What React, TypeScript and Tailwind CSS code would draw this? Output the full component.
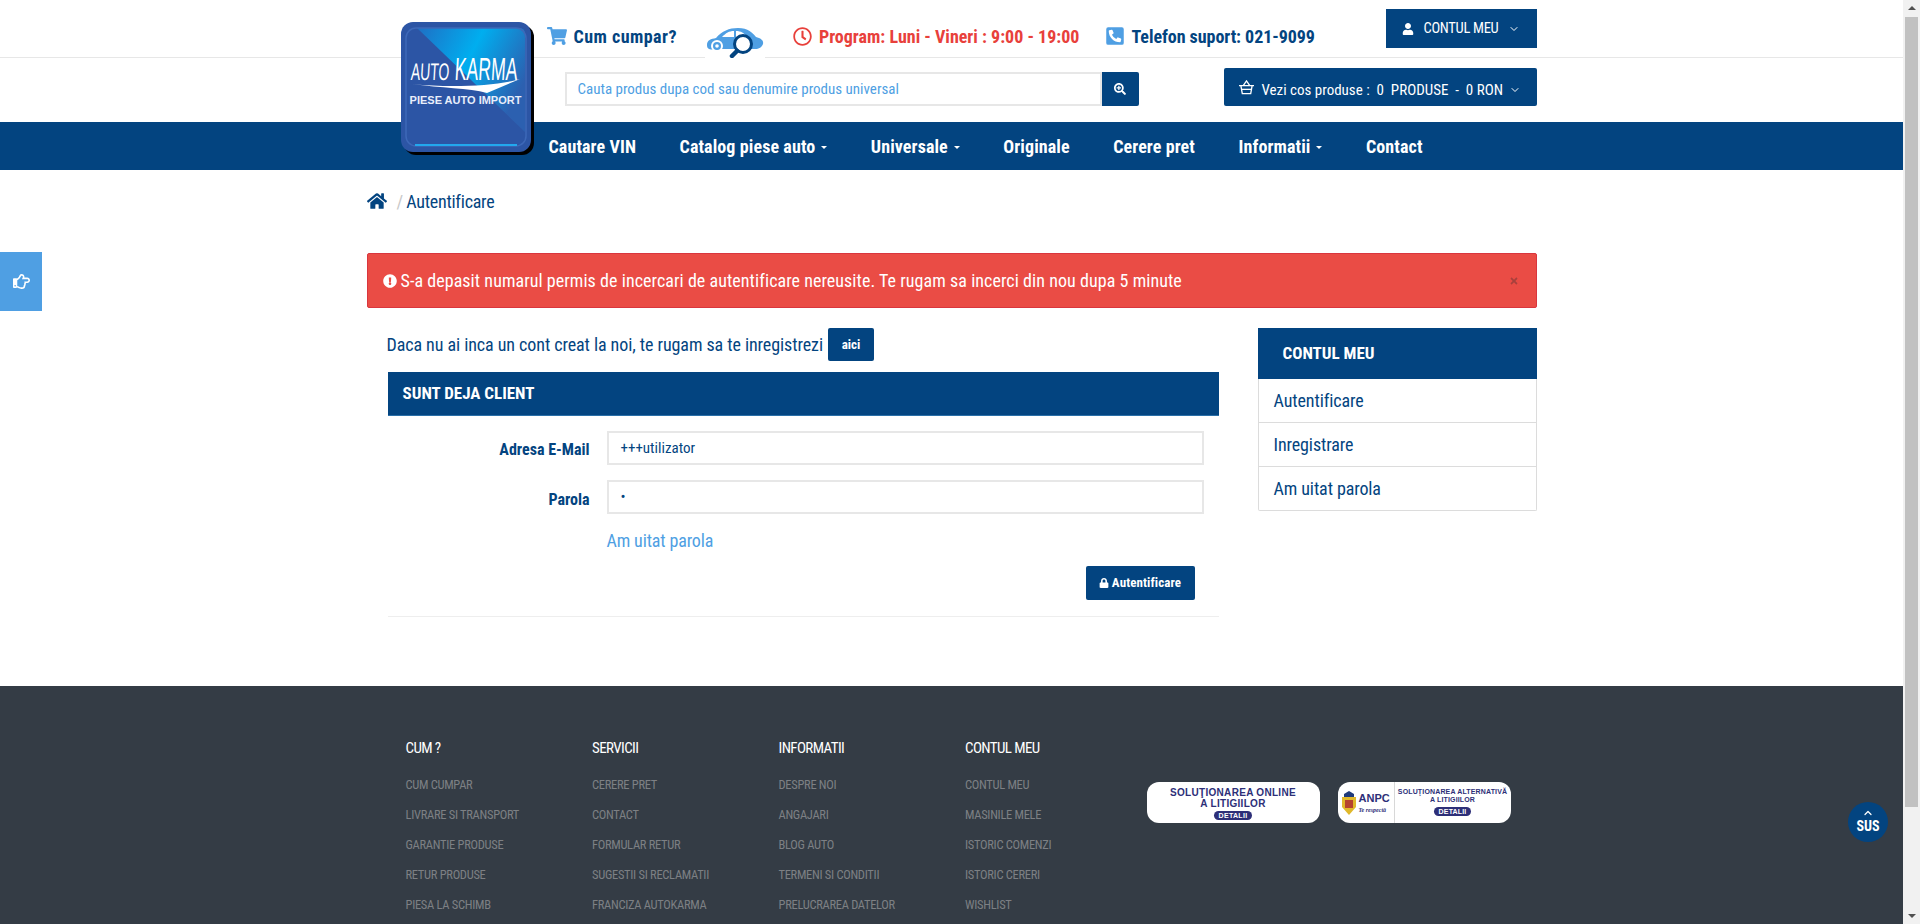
import { ChevronDown, ChevronUp } from "lucide-react";
import {
	FaExclamationCircle,
	FaHome,
	FaLock,
	FaPhoneSquareAlt,
	FaRegClock,
	FaRegHandPointRight,
	FaSearchPlus,
	FaShoppingCart,
	FaTimes,
	FaUser,
} from "react-icons/fa";

const navItems = [
	{ label: "Cautare VIN" },
	{ label: "Catalog piese auto", caret: true },
	{ label: "Universale", caret: true },
	{ label: "Originale" },
	{ label: "Cerere pret" },
	{ label: "Informatii", caret: true },
	{ label: "Contact" },
];

const footerColumns = [
	{
		title: "CUM ?",
		links: ["CUM CUMPAR", "LIVRARE SI TRANSPORT", "GARANTIE PRODUSE", "RETUR PRODUSE", "PIESA LA SCHIMB"],
	},
	{
		title: "SERVICII",
		links: ["CERERE PRET", "CONTACT", "FORMULAR RETUR", "SUGESTII SI RECLAMATII", "FRANCIZA AUTOKARMA"],
	},
	{
		title: "INFORMATII",
		links: ["DESPRE NOI", "ANGAJARI", "BLOG AUTO", "TERMENI SI CONDITII", "PRELUCRAREA DATELOR"],
	},
	{
		title: "CONTUL MEU",
		links: ["CONTUL MEU", "MASINILE MELE", "ISTORIC COMENZI", "ISTORIC CERERI", "WISHLIST"],
	},
];

function Logo() {
	return (
		<div className="absolute left-[34px] top-[22px] z-20 h-[130px] w-[130px] rounded-[12px] bg-[#2c55a5] shadow-[3px_3px_0_#000]">
			<svg viewBox="0 0 130 130" className="absolute inset-0 h-full w-full">
				<defs>
					<linearGradient id="logoShine" x1="0" y1="0" x2="1" y2="0.5">
						<stop offset="0" stopColor="#1f6fc4" />
						<stop offset="0.5" stopColor="#00aeef" />
						<stop offset="1" stopColor="#2c60b0" />
					</linearGradient>
				</defs>
				<path d="M16 6H118Q124 6 124 12V110Z" fill="url(#logoShine)" />
				<rect x="5" y="6" width="120" height="118" rx="10" fill="none" stroke="#3d68b8" strokeWidth="1.5" />
				<rect x="14" y="122" width="102" height="2" fill="#22a8ee" />
				<path d="M11 62C40 66 68 66 86 71L119 57C96 64 50 66 11 62Z" fill="#fff" />
			</svg>
			<span className="absolute left-[10px] top-[36px] origin-left -skew-x-6 scale-x-[0.58] font-['Liberation_Sans',sans-serif] text-[24px] leading-[27px] text-white">
				AUTO
			</span>
			<span className="absolute left-[54px] top-[30px] origin-left -skew-x-6 scale-x-[0.55] font-['Liberation_Sans',sans-serif] text-[32px] leading-[34px] text-white">
				KARMA
			</span>
			<div className="absolute inset-x-0 top-[72px] text-center font-['Liberation_Sans',sans-serif] text-[11px] font-bold leading-[12px] text-[#e8eefb]">
				PIESE AUTO IMPORT
			</div>
		</div>
	);
}

function CarSearch() {
	return (
		<svg viewBox="0 0 60 32" className="h-[32px] w-[60px]">
			<path
				d="M2 19C2 14 6 13 11 12C17 5 24 2 33 2C43 2 48 7 51 11C55 12 59 14 58 18C57 21 54 23 50 23H12C6 24 2 24 2 19Z"
				fill="#4f9fe3"
			/>
			<path d="M17 11C21 7 24 5 29 5V11ZM31 5C36 5 39 7 42 11H31Z" fill="#fff" />
			<circle cx="12" cy="20" r="6" fill="#fff" />
			<circle cx="12" cy="20" r="4" fill="#4f9fe3" />
			<circle cx="12" cy="20" r="1.8" fill="#fff" />
			<circle cx="38" cy="18" r="8.5" fill="#fff" stroke="#034480" strokeWidth="3" />
			<path d="M32 25L27 30" stroke="#034480" strokeWidth="4.5" strokeLinecap="round" />
		</svg>
	);
}

function Basket() {
	return (
		<svg viewBox="0 0 18 16" fill="none" stroke="#fff" strokeWidth="1.4" className="-mt-[5px] h-[15px] w-[17px] shrink-0">
			<path d="M1 6H17M3 6L4.5 14.5H13.5L15 6M5.5 6L9 1L12.5 6" />
			<path d="M4 10H14" />
		</svg>
	);
}

function Caret() {
	return <span className="ml-[6px] inline-block h-0 w-0 border-x-[3px] border-t-[3px] border-x-transparent border-t-white align-middle" />;
}

function Badges() {
	return (
		<div className="mt-[34px] flex gap-[18px] font-['Liberation_Sans',sans-serif] font-bold text-[#2d2f78]">
			<div className="flex h-[41px] w-[173px] flex-col items-center rounded-[12px] bg-white pt-[5px] text-[10px] leading-[11px] tracking-[0.3px]">
				<span>SOLUŢIONAREA ONLINE</span>
				<span>A LITIGIILOR</span>
				<span className="mt-[2px] rounded-full bg-[#2d2f78] px-[5px] text-[7px] leading-[9px] text-white">DETALII</span>
			</div>
			<div className="flex h-[41px] w-[173px] rounded-[12px] bg-white">
				<div className="flex w-[57px] items-center gap-[1px] border-r border-[#d8d8d8] pl-[2px]">
					<svg viewBox="0 0 18 24" className="h-[24px] w-[18px] shrink-0">
						<path d="M4 3L9 0L14 3V6H4Z" fill="#1f3a7a" />
						<path d="M2 6H16V16L9 24L2 16Z" fill="#e0b82a" />
						<rect x="5" y="9" width="8" height="8" fill="#b5422e" />
					</svg>
					<div className="flex flex-col leading-none">
						<span className="text-[11px]">ANPC</span>
						<span className="mt-[3px] font-['Liberation_Serif',serif] text-[6px] italic">Te respectă</span>
					</div>
				</div>
				<div className="flex flex-1 flex-col items-center pt-[6px] text-[7px] leading-[8px] tracking-[0.15px]">
					<span className="whitespace-nowrap">SOLUŢIONAREA ALTERNATIVĂ</span>
					<span>A LITIGIILOR</span>
					<span className="mt-[3px] rounded-full bg-[#2d2f78] px-[5px] text-[7px] leading-[9px] text-white">DETALII</span>
				</div>
			</div>
		</div>
	);
}

export default function App() {
	return (
		<div className="relative flex h-[924px] w-[1920px] overflow-hidden bg-white font-['Roboto',sans-serif] text-[#034480] [font-stretch:85%]">
			<div className="w-[1903px] shrink-0">
				<header>
					<div className="border-b border-[#e7e7e7]">
						<div className="relative mx-auto flex h-[57px] w-[1170px] items-start">
							<Logo />
							<div className="flex h-full flex-1 items-center pl-[180px] pt-[15px]">
								<FaShoppingCart className="text-[20px] text-[#4f9fe3]" />
								<span className="ml-[7px] text-[18px] font-bold tracking-[0.45px]">Cum cumpar?</span>
								<div className="z-10 -mb-px ml-[28px] flex h-[40px] w-[60px] items-end self-end bg-white">
									<CarSearch />
								</div>
								<FaRegClock className="ml-[28px] text-[19px] text-[#e8403b]" />
								<span className="ml-[7px] text-[18px] font-bold text-[#e8403b]">Program: Luni - Vineri : 9:00 - 19:00</span>
								<FaPhoneSquareAlt className="ml-[26px] text-[20px] text-[#4f9fe3]" />
								<span className="ml-[6px] text-[18px] font-bold tracking-[-0.05px]">Telefon suport: 021-9099</span>
							</div>
							<div className="mt-[9px] flex h-[39px] w-[151px] items-center justify-center gap-[10px] bg-[#034480] text-[14.5px] tracking-[-0.3px] text-white">
								<FaUser className="text-[12px]" />
								<span>CONTUL MEU</span>
								<ChevronDown size={12} />
							</div>
						</div>
					</div>
					<div className="mx-auto flex h-[64px] w-[1170px] items-start">
						<div className="ml-[198px] mt-[14px] flex h-[34px] w-[574px]">
							<div className="flex flex-1 items-center border-2 border-[#e7e7e7] pl-[11px] text-[15px] text-[#4f9fe3]">
								Cauta produs dupa cod sau denumire produs universal
							</div>
							<div className="flex w-[37px] items-center justify-center rounded-r-[2px] bg-[#034480] text-[12px] text-white">
								<FaSearchPlus />
							</div>
						</div>
						<div className="ml-auto mt-[10px] flex h-[38px] w-[313px] items-center rounded-[2px] bg-[#034480] pl-[14px] pt-[6px] text-[15px] text-white">
							<Basket />
							<span className="ml-[7px] whitespace-pre">Vezi cos produse :  0  PRODUSE  -  0 RON</span>
							<ChevronDown size={12} className="ml-[6px]" />
						</div>
					</div>
					<nav className="h-[48px] bg-[#034480]">
						<div className="mx-auto flex h-full w-[1170px] items-center gap-[43.5px] pl-[182px] text-[18px] font-bold tracking-[0.1px] text-white">
							{navItems.map((item) => (
								<span key={item.label}>
									{item.label}
									{item.caret && <Caret />}
								</span>
							))}
						</div>
					</nav>
				</header>

				<main className="mx-auto h-[516px] w-[1170px]">
					<div className="flex h-[62px] items-center text-[18px]">
						<FaHome className="text-[20px]" />
						<span className="ml-[10px] text-[#c8c8c8]">/</span>
						<span className="ml-[3px] tracking-[-0.25px]">Autentificare</span>
					</div>
					<div className="relative mt-[21px] flex h-[55px] items-center rounded-[2px] border border-[#d9363e] bg-[#ea4c45] pl-[15px] text-[18px] tracking-[0.055px] text-white">
						<FaExclamationCircle className="mr-[4px] text-[14px]" />
						S-a depasit numarul permis de incercari de autentificare nereusite. Te rugam sa incerci din nou dupa 5 minute
						<FaTimes className="absolute right-[17px] text-[10px] text-[#a8403c]" />
					</div>
					<div className="mt-[20px] flex items-start justify-between">
						<section className="ml-[21px] w-[831px]">
							<div className="flex h-[33px] items-center text-[18px]">
								<span className="-ml-px tracking-[-0.07px]">Daca nu ai inca un cont creat la noi, te rugam sa te inregistrezi</span>
								<span className="ml-[5px] flex h-[33px] w-[46px] items-center justify-center rounded-[2px] bg-[#034480] text-[13px] font-bold text-white">
									aici
								</span>
							</div>
							<div className="mt-[11px] flex h-[44px] items-center border-b border-[#2a6fa8] bg-[#034480] pl-[15px] text-[17px] font-bold text-white">
								SUNT DEJA CLIENT
							</div>
							<div className="mt-[15px] flex h-[34px] items-center">
								<label className="w-[202px] pt-[4px] text-right text-[16px] font-bold">Adresa E-Mail</label>
								<div className="ml-[17px] flex h-full w-[597px] items-center border-2 border-[#e7e7e7] pl-[12px] text-[15px]">+++utilizator</div>
							</div>
							<div className="mt-[15px] flex h-[34px] items-center">
								<label className="w-[202px] pt-[5px] text-right text-[16px] font-bold">Parola</label>
								<div className="ml-[17px] flex h-full w-[597px] items-center border-2 border-[#e7e7e7] pl-[12px] text-[15px]">•</div>
							</div>
							<div className="ml-[219px] mt-[12px] flex h-[28px] items-center text-[18px] tracking-[-0.15px] text-[#4f9fe3]">Am uitat parola</div>
							<div className="mt-[12px] flex justify-end pr-[24px]">
								<span className="flex h-[34px] w-[109px] items-center justify-center gap-[3px] rounded-[2px] bg-[#034480] text-[13px] font-bold tracking-[0.1px] text-white">
									<FaLock className="text-[10px]" />
									Autentificare
								</span>
							</div>
							<div className="mt-[16px] border-t border-[#eeeeee]" />
						</section>
						<aside className="w-[279px] text-[18px]">
							<div className="flex h-[51px] items-center bg-[#034480] pl-[25px] text-[17px] font-bold text-white">CONTUL MEU</div>
							<div className="rounded-b-[2px] border border-t-0 border-[#dcdcdc] tracking-[-0.1px]">
								<div className="flex h-[44px] items-center border-b border-[#dcdcdc] pl-[15px]">Autentificare</div>
								<div className="flex h-[44px] items-center border-b border-[#dcdcdc] pl-[15px]">Inregistrare</div>
								<div className="flex h-[43px] items-center pl-[15px]">Am uitat parola</div>
							</div>
						</aside>
					</div>
				</main>

				<footer className="h-[238px] bg-[#343c45]">
					<div className="mx-auto flex w-[1170px] pl-[39px] pt-[52px]">
						{footerColumns.map((col) => (
							<div key={col.title} className="w-[186.5px]">
								<h4 className="flex h-[20px] items-center text-[15px] tracking-[-0.6px] text-white">{col.title}</h4>
								<ul className="mt-[12px]">
									{col.links.map((link) => (
										<li key={link} className="flex h-[30px] items-center text-[12.5px] tracking-[-0.3px] text-[#7d8084]">
											{link}
										</li>
									))}
								</ul>
							</div>
						))}
						<div className="-ml-[5px] pt-[10px]">
							<Badges />
						</div>
					</div>
				</footer>
			</div>

			<div className="flex w-[17px] flex-col items-center bg-[#f1f1f1]">
				<div className="mt-[6px] h-0 w-0 border-x-[4px] border-b-[4px] border-x-transparent border-b-[#505050]" />
				<div className="mt-[7px] h-[790px] w-[13px] bg-[#c1c1c1]" />
				<div className="mt-auto mb-[6px] h-0 w-0 border-x-[4px] border-t-[4px] border-x-transparent border-t-[#505050]" />
			</div>

			{/* fixed widgets that float over the page */}
			<div className="absolute left-0 top-[252px] flex h-[59px] w-[42px] items-center justify-center bg-[#4f9fe3] text-[17px] text-white">
				<FaRegHandPointRight />
			</div>
			<div className="absolute left-[1848px] top-[802px] flex h-[40px] w-[40px] flex-col items-center justify-center rounded-full bg-[#034480] pb-[4px] text-[14px] font-bold leading-none text-white">
				<ChevronUp size={12} strokeWidth={2.5} />
				SUS
			</div>
		</div>
	);
}
